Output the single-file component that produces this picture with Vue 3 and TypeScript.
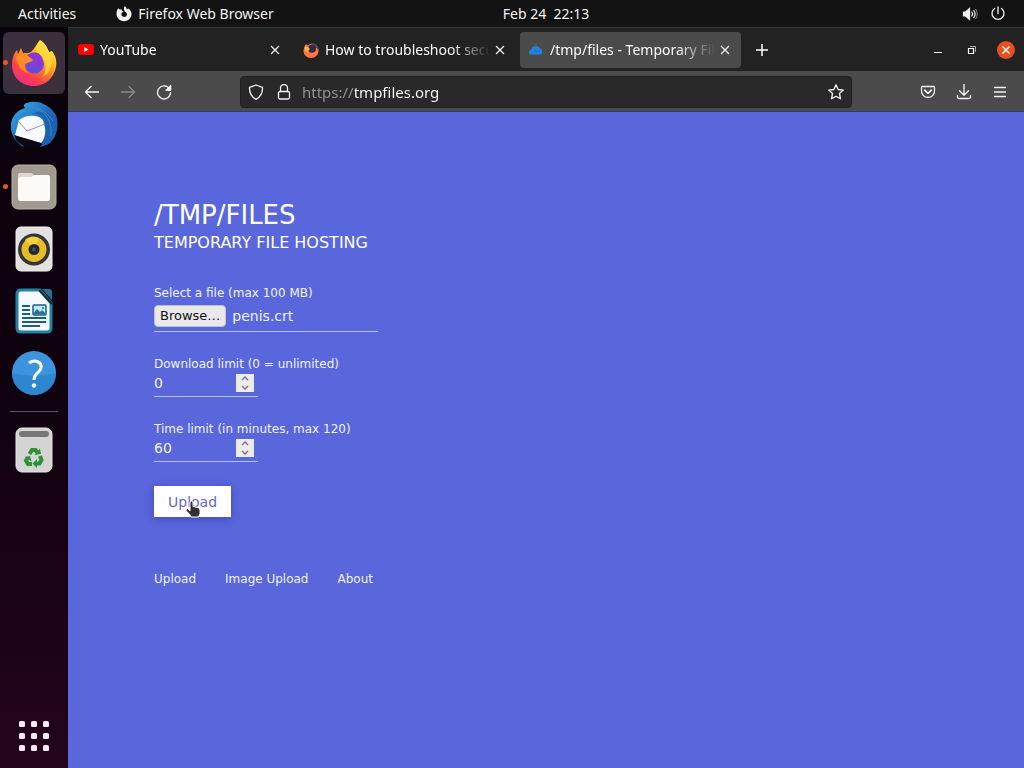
<script setup lang="ts">
import { ref } from 'vue'

interface Tab { id: string; title: string; active: boolean }
interface Limit { id: string; label: string; value: number; max?: number }

const tabs = ref<Tab[]>([
  { id: 'youtube', title: 'YouTube', active: false },
  { id: 'mozilla', title: 'How to troubleshoot secu', active: false },
  { id: 'tmp', title: '/tmp/files - Temporary File', active: true },
])
const limits = ref<Limit[]>([
  { id: 'downloads', label: 'Download limit (0 = unlimited)', value: 0 },
  { id: 'minutes', label: 'Time limit (in minutes, max 120)', value: 60, max: 120 },
])
const address = ref('https://tmpfiles.org')
const fileName = ref('penis.crt')
const picker = ref<HTMLInputElement | null>(null)
const dots = Array.from({ length: 9 }, (_, i) => ({ x: 2 + (i % 3) * 12, y: 2 + Math.floor(i / 3) * 12 }))

function onPick(e: Event) {
  const f = (e.target as HTMLInputElement).files?.[0]
  if (f) fileName.value = f.name
}
function step(l: Limit, d: number) {
  l.value = Math.min(l.max ?? Infinity, Math.max(0, l.value + d))
}
</script>

<template>
  <div class="desktop">
    <header class="topbar">
      <div class="side">
        <button class="plain">Activities</button>
        <button class="plain app-menu">
          <svg width="16" height="16" viewBox="0 0 16 16"><path d="M8.600 0.300C10 1 10.500 2 11 3.400L12.200 2.600C14.500 4 15.800 6.200 15.500 9A7.500 7.200 0 0 1 .6 9C.3 6 1 3.700 2.300 2.300L3.400 3.600 5.200 3.300 6.300 5 7.500 5.400 6.300 6.600C4.700 7.200 5 10.600 7.900 10.900 11.800 11 12 6.700 8.900 5.800 7.800 4 7.700 2 8.600.3Z" fill="#f2f2f2" /></svg>
          Firefox Web Browser
        </button>
      </div>
      <button class="plain clock">Feb 24&nbsp; 22:13</button>
      <div class="side status">
        <button class="plain" aria-label="Volume">
          <svg width="16" height="16" viewBox="0 0 16 16" fill="none" stroke="#f2f2f2" stroke-width="1.200" stroke-linecap="round"><path d="M1.500 6h2L7.500 2.500v11L3.500 10h-2z" fill="#f2f2f2" /><path d="M9.800 6q1.600 2 0 4M11.800 4.500q2.600 3.500 0 7" /><path d="M13.800 3.300q3 4.700 0 9.400" stroke="#888" stroke-width="1" /></svg>
        </button>
        <button class="plain" aria-label="Power">
          <svg width="16" height="16" viewBox="0 0 16 16" fill="none" stroke="#f2f2f2" stroke-width="1.300" stroke-linecap="round"><path d="M4.500 2.500a6 6 0 1 0 7 0M8 1v6.500" /></svg>
        </button>
      </div>
    </header>

    <div class="workspace">
      <nav class="dock" aria-label="Dock">
        <button class="launcher focused running" aria-label="Firefox">
          <svg width="46" height="46" viewBox="0 0 46 46">
            <defs>
              <linearGradient id="fox" x1="0.850" y1="0.050" x2="0.250" y2="0.950"><stop offset="0" stop-color="#fff34a" /><stop offset="0.300" stop-color="#ffc02b" /><stop offset="0.550" stop-color="#ff7a2c" /><stop offset="0.800" stop-color="#ff3c50" /><stop offset="1" stop-color="#ec2d85" /></linearGradient>
              <linearGradient id="globe" x1="0.700" y1="0" x2="0.300" y2="1"><stop offset="0" stop-color="#a433d8" /><stop offset="1" stop-color="#5650d8" /></linearGradient>
            </defs>
            <path d="M29 0C34 3 36 7 38 12L41 11C45 16 46 22 45 27 43 38 34 46 23 46 10 46 1 37 1 25 1 19 3 13 6 10L7 14 10 8 12 13 17 13C22 12 23 8 29 0Z" fill="url(#fox)" />
            <circle cx="23.500" cy="24" r="9.500" fill="url(#globe)" />
            <path d="M14 18C18 11 28 10 33 19L30 17C32 22 31 25 29 28 26 19 21 19 14 18Z" fill="#8b36d9" />
            <path d="M5 17C10 11 17 15 22 20 20 23 15 22 14 25 13 28 15 31 18 33 11 32 7 27 5 17Z" fill="#ff8c25" />
            <path d="M29 0C34 3 37 9 39 14 43 22 40 34 31 37 37 31 35 21 30 16 25 10 24 6 29 0Z" fill="#ffdc3b" opacity="0.800" />
          </svg>
        </button>
        <button class="launcher" aria-label="Thunderbird">
          <svg width="50" height="50" viewBox="0 0 50 50">
            <defs><linearGradient id="bird" x1="0" y1="0" x2="1" y2="1"><stop offset="0" stop-color="#3eb2ee" /><stop offset="0.500" stop-color="#1e6dbd" /><stop offset="1" stop-color="#194a98" /></linearGradient></defs>
            <path d="M22 2C14 3 14 6 16 8 6 11 1 19 2 29 3 38 9 44 15 47L11 39 38 45C47 40 51 27 47 15L43 10C37 4 30 1 22 2Z" fill="url(#bird)" />
            <path d="M6 35L10 20C16 15 29 14 34 20L36 28C37 34 35 40 32 43L7 36Z" fill="#f7f9fc" />
            <path d="M9 21L18 31 36 24" fill="none" stroke="#8b98a9" stroke-width="1" />
            <path d="M22 15C27 12 34 15 36 21 41 29 37 40 31 47 43 45 49 34 47 23 43 12 32 8 22 15Z" fill="#1d62ae" />
            <path d="M17 9C24 5 36 9 44 21M27 9C38 12 43 23 42 36" fill="none" stroke="#3a8bca" stroke-width="1" />
            <path d="M5 35L32 43 29 47C21 49 11 45 7 40Z" fill="#0b0610" />
          </svg>
        </button>
        <button class="launcher running" aria-label="Files">
          <svg width="46" height="46" viewBox="0 0 46 46"><rect x="1" y="1" width="44" height="44" rx="6" fill="#a09a91" stroke="#b5afa6" /><path d="M7 18V11q0-2 2-2h11q2 0 3 3h14q2 0 2 2v20z" fill="#ded9cf" /><rect x="7" y="13" width="32" height="24" rx="2.500" fill="#fbfaf7" /><path d="M7 15q0-1 3-1h9l4-3h14q2 0 2 3v6H7z" fill="#fbfaf7" /></svg>
        </button>
        <button class="launcher" aria-label="Rhythmbox">
          <svg width="38" height="46" viewBox="0 0 38 46"><rect x="1" y="1" width="36" height="44" rx="5" fill="#e4e0df" stroke="#f5f3f2" /><circle cx="19" cy="23.500" r="16" fill="#343439" /><circle cx="19" cy="23.500" r="12.500" fill="#e6bd25" /><path d="M19 23L10 14A12.500 12.500 0 0 1 24 12Z" fill="#f2d33c" /><circle cx="19" cy="23.500" r="5.500" fill="#242831" /><circle cx="19" cy="23.500" r="2" fill="#4a4e57" /></svg>
        </button>
        <button class="launcher" aria-label="LibreOffice Writer">
          <svg width="38" height="46" viewBox="0 0 38 46"><path d="M6 2h19l11 13v25q0 4-4 4H6q-4 0-4-4V6q0-4 4-4Z" fill="#f4fafc" stroke="#2580a8" stroke-width="3" /><path d="M27 1h7q3 0 3 3v8z" fill="#247192" /><path d="M24 2L37 16" stroke="#102d40" stroke-width="2" /><path d="M7 18h8M7 22h8M7 26h8M7 30h24M7 34h24M7 38h18" stroke="#195f7f" stroke-width="2" /><rect x="18" y="17" width="13" height="10" rx="1" fill="#bde7f6" stroke="#195f7f" stroke-width="1.500" /><path d="M18 26l4-5 3 3 2-2 4 4z" fill="#1e749a" /><circle cx="28" cy="20" r="1" fill="#1e749a" /></svg>
        </button>
        <button class="launcher" aria-label="Help">
          <svg width="46" height="46" viewBox="0 0 46 46"><circle cx="23" cy="23" r="22" fill="#3b94dc" /><path d="M1 23A22 22 0 0 0 45 23Q23 29 1 23Z" fill="#2f86d0" /><path d="M18 13C24 9 31 12 30 18 29 23 23 23 23 30" fill="none" stroke="#fff" stroke-width="3" /><circle cx="23" cy="35.500" r="2.200" fill="#fff" /></svg>
        </button>
        <hr>
        <button class="launcher" aria-label="Trash">
          <svg width="38" height="46" viewBox="0 0 38 46"><rect x="1" y="1" width="36" height="44" rx="6" fill="#d5d4d4" stroke="#e8e6e6" /><rect x="4" y="4" width="30" height="6" rx="3" fill="#777679" /><g fill="none" stroke="#2d9236" stroke-width="4"><path d="M14.500 27l2.500-4h3.500l2 3" /><path d="M25 29l1.500 4-2 3.500H21" /><path d="M17 37h-4l-2-3.500 2-3" /></g><path d="M19.500 28l6.500-1-1-5.500zM22 32v9l-4.500-4.500zM9.500 30l5.500-1 1.500 5.500z" fill="#2d9236" /></svg>
        </button>
        <button class="launcher apps" aria-label="Show Applications">
          <svg width="34" height="34" viewBox="0 0 34 34"><rect v-for="(d, i) in dots" :key="i" :x="d.x" :y="d.y" width="6" height="6" rx="1.500" fill="#fbeafa" /></svg>
        </button>
      </nav>

      <section class="window">
        <div class="tabstrip">
          <div v-for="t in tabs" :key="t.id" class="tab" :class="{ active: t.active }">
            <svg v-if="t.id === 'youtube'" width="16" height="16" viewBox="0 0 16 16"><rect y="2" width="16" height="11" rx="3" fill="#f00" /><path d="M6.300 5L10.500 7.500l-4.200 2.500z" fill="#fff" /></svg>
            <svg v-else-if="t.id === 'mozilla'" width="16" height="16" viewBox="0 0 16 16"><path d="M3 2l2 1.500Q8 .5 12 2q4 2.500 3.500 7A7.500 7 0 0 1 .5 9Q.3 5 3 2Z" fill="#ff793d" /><path d="M7 1q8-1 8.500 7-2-3-5-3z" fill="#554070" /><circle cx="9" cy="6.800" r="4" fill="#322b3c" /><path d="M2 5q3-1 5 2-3 2-1 4-5-1-4-6Z" fill="#ffb05c" /></svg>
            <svg v-else width="16" height="16" viewBox="0 0 16 16"><path d="M3 12.500Q1 12.500 1 10.300 1 8 3.300 7.800 3.300 5 5.800 4.200q4-1.200 6 2 2.400.5 2.400 3.300 0 3-2.200 3Z" fill="#2383dd" /><path d="M6 9.500q1.500-2 3 0 1.500-2 3 0" fill="none" stroke="#1668b8" /><path d="M6 2.500h3" stroke="#7d5445" /></svg>
            <span class="tab-title">{{ t.title }}</span>
            <button class="plain tab-close" aria-label="Close tab"><svg width="10" height="10" viewBox="0 0 10 10" stroke="#f4f4f4" stroke-width="1.200"><path d="M1 1l8 8M9 1L1 9" /></svg></button>
          </div>
          <button class="plain new-tab" aria-label="New tab"><svg width="14" height="14" viewBox="0 0 14 14" stroke="#fff" stroke-width="1.500"><path d="M7 1v12M1 7h12" /></svg></button>
          <div class="controls">
            <button class="plain" aria-label="Minimize"><svg width="10" height="10" viewBox="0 0 10 10"><path d="M1 7.500h8" stroke="#fff" /></svg></button>
            <button class="plain" aria-label="Restore"><svg width="10" height="10" viewBox="0 0 10 10" fill="none" stroke="#fff"><path d="M1.500 3.500h5v5h-5z" stroke-width="1.200" /><path d="M3 1.500h5.500V7" stroke="#aaa" /></svg></button>
            <button class="plain quit" aria-label="Close"><svg width="10" height="10" viewBox="0 0 10 10" stroke="#fff" stroke-width="1.500"><path d="M1.500 1.500l7 7M8.500 1.500l-7 7" /></svg></button>
          </div>
        </div>

        <div class="toolbar">
          <button class="plain tool" aria-label="Back"><svg viewBox="0 0 16 16"><path d="M14.500 8H1.500M7 2.500L1.500 8 7 13.500" /></svg></button>
          <button class="plain tool" aria-label="Forward" disabled><svg class="dim" viewBox="0 0 16 16"><path d="M1.500 8h13M9 2.500L14.500 8 9 13.500" /></svg></button>
          <button class="plain tool" aria-label="Reload"><svg viewBox="0 0 16 16"><path d="M13.500 5A6.500 6.500 0 1 0 14.500 8.500M14.500 1.500v4.500H10" /><path d="M14.500 2v4h-4z" fill="#f4f4f4" /></svg></button>
          <div class="urlbar">
            <svg viewBox="0 0 16 16"><path d="M8 1L14.500 3.300C14.700 9 12.500 13 8 15.300 3.500 13 1.300 9 1.500 3.300Z" /></svg>
            <svg viewBox="0 0 16 16"><rect x="2.500" y="7.500" width="11" height="7.500" rx="1.500" /><path d="M4.500 7.500V4a3.500 3.500 0 0 1 7 0v3.500" /></svg>
            <input v-model="address" class="address" type="text" aria-label="Address" spellcheck="false">
            <button class="plain" aria-label="Bookmark this page"><svg viewBox="0 0 16 16"><path d="M8 .8l2.200 4.700 5.100.6-3.800 3.500 1 5.200L8 12.300l-4.500 2.500 1-5.200L.7 6.100l5.100-.6Z" /></svg></button>
          </div>
          <button class="plain tool" aria-label="Save to Pocket"><svg viewBox="0 0 16 16"><path d="M2.500 2.500h11q1 0 1 1V7a6.500 6.500 0 0 1-13 0V3.500q0-1 1-1Z" /><path d="M4.700 6.200L8 9.300l3.300-3.100" stroke-width="1.700" /></svg></button>
          <button class="plain tool" aria-label="Downloads"><svg viewBox="0 0 16 16"><path d="M8 .5v10.500M3.500 6.800L8 11.200l4.500-4.400M1.500 11.500v1.500q0 1.500 1.500 1.500h10q1.500 0 1.500-1.500v-1.500" /></svg></button>
          <button class="plain tool" aria-label="Menu"><svg viewBox="0 0 16 16"><path d="M2.500 3.500h11M2.500 8h11M2.500 12.500h11" /></svg></button>
        </div>

        <main class="page">
          <h1>/TMP/FILES</h1>
          <h2>TEMPORARY FILE HOSTING</h2>
          <form @submit.prevent>
            <div class="field">
              <label for="file">Select a file (max 100 MB)</label>
              <div class="file-row">
                <button type="button" class="browse" @click="picker?.click()">Browse…</button>
                <span>{{ fileName }}</span>
                <input id="file" ref="picker" type="file" hidden @change="onPick">
              </div>
            </div>
            <div v-for="l in limits" :key="l.id" class="field">
              <label :for="l.id">{{ l.label }}</label>
              <div class="number-row">
                <input :id="l.id" v-model.number="l.value" type="number" min="0" :max="l.max">
                <div class="stepper">
                  <button type="button" aria-label="Increase" @click="step(l, 1)"><svg width="8" height="5" viewBox="0 0 8 5"><path d="M1 4l3-3 3 3" /></svg></button>
                  <button type="button" aria-label="Decrease" @click="step(l, -1)"><svg width="8" height="5" viewBox="0 0 8 5"><path d="M1 1l3 3 3-3" /></svg></button>
                </div>
              </div>
            </div>
            <div class="submit">
              <button type="submit">Upload</button>
              <svg class="pointer" width="16" height="19" viewBox="0 0 16 19"><path d="M5 9.500V3q0-2 1.500-2T8 3v3.500l5 1q2 .5 2 3v3L13.500 17H6l-1.500-3L1 11q-.5-2 1.500-2.500L5 11Z" fill="#302f31" stroke="#fff" /></svg>
            </div>
          </form>
          <nav class="links">
            <a href="#upload">Upload</a>
            <a href="#image">Image Upload</a>
            <a href="#about">About</a>
          </nav>
        </main>
      </section>
    </div>
  </div>
</template>

<style>
body { margin: 0; background: #121212; }
</style>

<style scoped>
* { box-sizing: border-box; }
.desktop { min-height: 100vh; display: flex; flex-direction: column; font: 14px/20px "Noto Sans", "Open Sans", sans-serif; color: #f2f2f2; }
svg { display: block; flex: none; }
.plain { background: none; border: 0; padding: 0; margin: 0; color: inherit; font: inherit; display: flex; align-items: center; justify-content: center; white-space: nowrap; }
.topbar { height: 27px; background: #131313; display: flex; align-items: center; padding: 0 18px; }
.side { flex: 1; display: flex; align-items: center; gap: 40px; }
.app-menu { gap: 6px; }
.clock { padding-left: 68px; }
.side.status { justify-content: flex-end; gap: 12px; }
.workspace { flex: 1; display: flex; }
.dock { width: 68px; flex: none; padding: 5px 3px 1px; display: flex; flex-direction: column; background: linear-gradient(#08030b, #10020f 50%, #24041d); }
.launcher { position: relative; height: 62px; border: 0; border-radius: 6px; padding: 0; background: none; display: flex; align-items: center; justify-content: center; }
.focused { background: #3b303c; }
.running::before { content: ""; position: absolute; left: 0; top: 28px; width: 5px; height: 5px; border-radius: 50%; background: #e95420; }
.dock hr { width: 48px; height: 1px; border: 0; background: #5e5260; margin: 7px auto; }
.apps { margin-top: auto; }
.window { flex: 1; min-width: 0; display: flex; flex-direction: column; background: #5966dc; }
.tabstrip { height: 44px; background: #222; border-top: 1px solid #363636; display: flex; align-items: center; gap: 4px; padding: 0 9px 0 2px; }
.tab { flex: 0 1 221px; min-width: 0; height: 36px; display: flex; align-items: center; padding: 0 11px 0 8px; border-radius: 4px; }
.tab.active { background: #4b4b4b; }
.tab-title { flex: 1; min-width: 0; margin-left: 6px; overflow: hidden; white-space: nowrap; color: #fafafa; mask-image: linear-gradient(to left, transparent, #000 40px); }
.tab-close { width: 10px; height: 10px; margin-left: 4px; }
.new-tab { width: 34px; height: 34px; }
.controls { margin-left: auto; display: flex; align-items: center; gap: 16px; }
.controls .plain { width: 18px; height: 18px; }
.controls .quit { background: #e64f20; border-radius: 50%; }
.toolbar { height: 41px; background: #4b4b4b; border-bottom: 1px solid #303a6b; display: flex; align-items: center; padding: 1px 6px 0; }
.tool { width: 36px; height: 32px; }
.toolbar svg { width: 16px; height: 16px; fill: none; stroke: #f4f4f4; stroke-width: 1.3; stroke-linecap: round; stroke-linejoin: round; }
.toolbar svg.dim { stroke: #8a8a8a; }
.urlbar { flex: 1; min-width: 0; height: 32px; margin: 0 58px; padding: 0 7px; display: flex; align-items: center; gap: 12px; background: #292929; border: 1px solid #202020; border-radius: 4px; }
.address { flex: 1; min-width: 0; border: 0; outline: 0; padding: 0; margin-left: -2px; font: inherit; font-size: 15px; background: linear-gradient(90deg, #969696 53px, #fff 53px); background-clip: text; color: transparent; }
.page { flex: 1; padding: 86px; font: 14px/18px "DejaVu Sans", sans-serif; color: #f0f3ff; }
h1, h2 { margin: 0; font-weight: 400; color: #fff; }
h1 { font-size: 26px; line-height: 34px; }
h2 { font-size: 16px; line-height: 22px; margin-bottom: 31px; }
.field { margin-bottom: 24px; }
.field label { display: block; font-size: 12px; line-height: 16px; }
.file-row { width: 224px; height: 31px; display: flex; align-items: center; gap: 6px; border-bottom: 1px solid #b9c0f2; }
.browse { height: 22px; padding: 0 5px; border: 1px solid #bfc0cd; border-radius: 4px; background: #e9e9ed; color: #111; font: 13px/18px "DejaVu Sans", sans-serif; }
.number-row { width: 104px; height: 25px; display: flex; align-items: flex-start; padding: 2px 4px 0 0; border-bottom: 1px solid #b9c0f2; }
.number-row input { flex: 1; min-width: 0; height: 18px; padding: 0; border: 0; outline: 0; background: none; color: inherit; font: inherit; appearance: textfield; }
.stepper { width: 18px; height: 18px; display: flex; flex-direction: column; background: #ececf0; }
.stepper button { flex: 1; border: 0; padding: 0; background: none; display: flex; align-items: center; justify-content: center; }
.stepper path { fill: none; stroke: #77777c; stroke-width: 1.4; }
.submit { position: relative; width: max-content; }
.submit button { display: block; height: 31px; padding: 0 14px; border: 0; background: #fff; color: #6868c0; font: inherit; box-shadow: 0 2px 8px rgba(30, 35, 110, 0.4); }
.pointer { position: absolute; left: 31px; top: 14px; }
.links { margin-top: 53px; display: flex; gap: 29px; font-size: 12px; }
.links a { color: inherit; text-decoration: none; }
</style>
